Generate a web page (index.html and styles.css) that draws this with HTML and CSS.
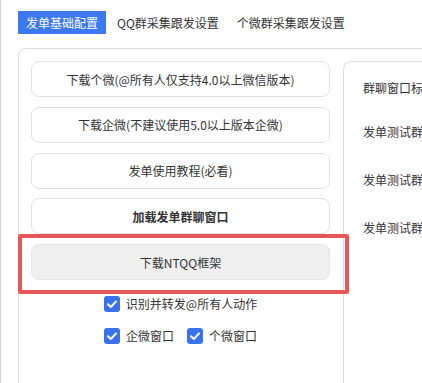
FILE: index.html
```html
<!DOCTYPE html>
<html lang="zh">
<head>
<meta charset="utf-8">
<title>发单基础配置</title>
<link rel="stylesheet" href="styles.css">
</head>
<body>
<div class="app">
  <nav class="tabs">
    <span class="tab active">发单基础配置</span>
    <span class="tab">QQ群采集跟发设置</span>
    <span class="tab">个微群采集跟发设置</span>
  </nav>
  <section class="panel">
    <div class="left">
      <button class="btn">下载个微(@所有人仅支持4.0以上微信版本)</button>
      <button class="btn">下载企微(不建议使用5.0以上版本企微)</button>
      <button class="btn">发单使用教程(必看)</button>
      <button class="btn bold">加载发单群聊窗口</button>
      <div class="highlight-wrap">
        <button class="btn grey">下载NTQQ框架</button>
        <span class="highlight"></span>
      </div>
      <div class="checks">
        <label class="check"><span class="box"><svg viewBox="0 0 16 16" width="16" height="16"><path d="M4 8.2 L6.9 11 L12 5.4" fill="none" stroke="#fff" stroke-width="2" stroke-linecap="round" stroke-linejoin="round"/></svg></span>识别并转发@所有人动作</label>
      </div>
      <div class="checks">
        <label class="check"><span class="box"><svg viewBox="0 0 16 16" width="16" height="16"><path d="M4 8.2 L6.9 11 L12 5.4" fill="none" stroke="#fff" stroke-width="2" stroke-linecap="round" stroke-linejoin="round"/></svg></span>企微窗口</label>
        <label class="check"><span class="box"><svg viewBox="0 0 16 16" width="16" height="16"><path d="M4 8.2 L6.9 11 L12 5.4" fill="none" stroke="#fff" stroke-width="2" stroke-linecap="round" stroke-linejoin="round"/></svg></span>个微窗口</label>
      </div>
    </div>
    <div class="right">
      <div class="rline first">群聊窗口标题</div>
      <div class="rline">发单测试群1</div>
      <div class="rline">发单测试群2</div>
      <div class="rline">发单测试群3</div>
    </div>
  </section>
</div>
</body>
</html>
```

FILE: styles.css
```css
html, body {
  margin: 0;
  padding: 0;
  height: 383px;
  overflow: hidden;
  background: #fff;
}
body {
  font-family: "Noto Sans CJK SC", "Noto Sans", sans-serif;
  font-size: 12px;
  color: #333;
}
.app {
  border-left: 1px solid #cfcfcf;
  height: 383px;
  box-sizing: border-box;
  padding-left: 17px;
  padding-top: 11px;
}
.tabs {
  display: flex;
  gap: 2px;
  height: 23px;
}
.tab {
  display: flex;
  align-items: center;
  justify-content: center;
  padding: 0 8px;
  height: 23px;
  white-space: nowrap;
  color: #333;
}
.tab.active {
  width: 88px;
  box-sizing: border-box;
  padding: 0;
  background: #3b78f1;
  color: #fff;
  margin-right: 1px;
}
.panel {
  margin-top: 14px;
  margin-right: -40px;
  height: 380px;
  box-sizing: border-box;
  border: 1px solid #dedede;
  border-radius: 8px;
  padding: 12px 0 0 12px;
  display: flex;
  gap: 13px;
}
.left {
  width: 299px;
  flex: none;
  display: flex;
  flex-direction: column;
  gap: 9.75px;
}
.btn {
  display: block;
  width: 299px;
  height: 36px;
  box-sizing: border-box;
  border: 1px solid #e2e2e2;
  border-radius: 8px;
  background: #fff;
  font-family: inherit;
  font-size: 12px;
  color: #333;
  padding: 0;
  margin: 0;
}
.btn.bold { font-weight: bold; }
.btn.grey { background: #efefef; border-color: #e6e6e6; }
.highlight-wrap {
  position: relative;
}
.highlight {
  position: absolute;
  left: -13px;
  top: -10px;
  width: 331px;
  height: 60px;
  box-sizing: border-box;
  border: 4px solid #e65858;
  border-radius: 2px;
  pointer-events: none;
}
.checks {
  display: flex;
  justify-content: center;
  gap: 13px;
  height: 16px;
  line-height: 16px;
  margin-top: 6.25px;
}
.check {
  display: flex;
  align-items: center;
  gap: 6px;
  white-space: nowrap;
  font-size: 12px;
}
.box {
  width: 16px;
  height: 16px;
  border-radius: 3px;
  background: #3a72ee;
  display: block;
}
.box svg { display: block; }
.right {
  flex: 1;
  border: 1px solid #dedede;
  border-right: none;
  border-bottom: none;
  border-radius: 8px 0 0 0;
  padding: 16px 0 0 19px;
  white-space: nowrap;
}
.rline {
  line-height: 20px;
  height: 20px;
  margin-top: 28px;
}
.rline.first { margin-top: 0; }
.rline.first + .rline { margin-top: 24px; }
```
